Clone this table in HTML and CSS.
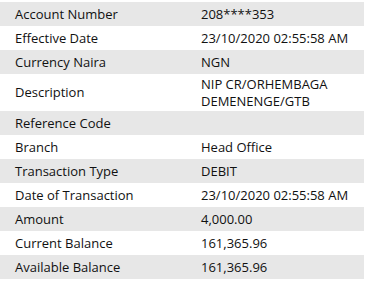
FILE: index.html
```html
<!DOCTYPE html>
<html lang="en">
<head>
<meta charset="UTF-8">
<title>Transaction Details</title>
<link rel="stylesheet" href="styles.css">
</head>
<body>
<!-- Transaction details table -->
<table class="details">
<tr class="shade"><td class="label">Account Number</td><td class="value">208****353</td></tr>
<tr><td class="label">Effective Date</td><td class="value">23/10/2020 02:55:58 AM</td></tr>
<tr class="shade"><td class="label">Currency Naira</td><td class="value">NGN</td></tr>
<tr class="tall"><td class="label">Description</td><td class="value">NIP CR/ORHEMBAGA<br>DEMENENGE/GTB</td></tr>
<tr class="shade"><td class="label">Reference Code</td><td class="value"></td></tr>
<tr><td class="label">Branch</td><td class="value">Head Office</td></tr>
<tr class="shade"><td class="label">Transaction Type</td><td class="value">DEBIT</td></tr>
<tr><td class="label">Date of Transaction</td><td class="value">23/10/2020 02:55:58 AM</td></tr>
<tr class="shade"><td class="label">Amount</td><td class="value">4,000.00</td></tr>
<tr><td class="label">Current Balance</td><td class="value">161,365.96</td></tr>
<tr class="shade"><td class="label">Available Balance</td><td class="value">161,365.96</td></tr>
</table>
</body>
</html>
```

FILE: styles.css
```css
body {
margin: 0;
padding: 2px 0 0 0;
background: #ffffff;
font-family: 'Open Sans', sans-serif;
font-size: 13px;
color: #111111;
}

.details {
width: 364px;
border-collapse: collapse;
}

.details td {
padding: 0;
height: 24px;
line-height: 17px;
vertical-align: middle;
white-space: nowrap;
}

.details .label {
width: 186px;
padding-left: 15px;
}

.details tr.tall td {
height: 37px;
}

.shade {
background: #e7e7e7;
}
```
